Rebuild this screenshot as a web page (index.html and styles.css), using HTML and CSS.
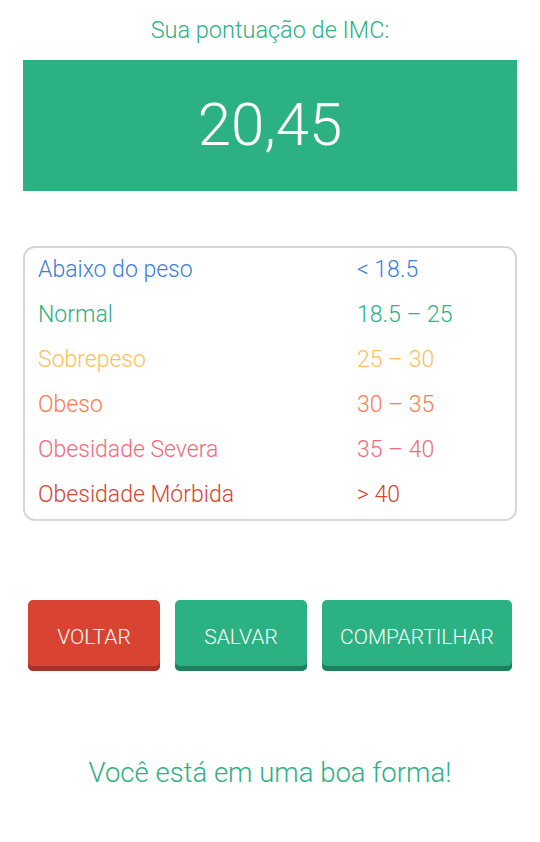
FILE: index.html
```html
<!DOCTYPE html>
<html lang="pt-BR">
<head>
    <meta charset="UTF-8">
    <meta name="viewport" content="width=device-width, initial-scale=1.0">
    <title>Resultado IMC</title>
    <link rel="stylesheet" href="styles.css">
</head>
<body>
    <h1 class="score-title">Sua pontuação de IMC:</h1>
    <div class="score-box">20,45</div>

    <div class="range-table">
        <div class="range-row under"><span class="range-label">Abaixo do peso</span><span class="range-value">&lt; 18.5</span></div>
        <div class="range-row normal"><span class="range-label">Normal</span><span class="range-value">18.5 – 25</span></div>
        <div class="range-row over"><span class="range-label">Sobrepeso</span><span class="range-value">25 – 30</span></div>
        <div class="range-row obese"><span class="range-label">Obeso</span><span class="range-value">30 – 35</span></div>
        <div class="range-row severe"><span class="range-label">Obesidade Severa</span><span class="range-value">35 – 40</span></div>
        <div class="range-row morbid"><span class="range-label">Obesidade Mórbida</span><span class="range-value">&gt; 40</span></div>
    </div>

    <div class="actions">
        <button type="button" class="btn btn-back">VOLTAR</button>
        <button type="button" class="btn btn-save">SALVAR</button>
        <button type="button" class="btn btn-share">COMPARTILHAR</button>
    </div>

    <p class="verdict">Você está em uma boa forma!</p>
</body>
</html>
```

FILE: styles.css
```css
body {
    font-family: Roboto, "Noto Sans", sans-serif;
    font-weight: 300;
    background-color: #fff;
    margin: 0;
    padding: 0 23px;
}
.score-title {
    color: #2bb182;
    font-size: 23.5px;
    font-weight: 300;
    text-align: center;
    margin: 0;
    padding-top: 16px;
    line-height: 28px;
}
.score-box {
    background-color: #2bb182;
    color: #fff;
    height: 131px;
    margin-top: 16px;
    font-size: 60px;
    line-height: 130px;
    text-align: center;
}
.range-table {
    margin-top: 55px;
    border: 2px solid #d6d6d6;
    border-radius: 12px;
    padding: 0 13px 1px;
}
.range-row {
    display: flex;
    height: 45px;
    align-items: center;
    font-size: 23px;
    line-height: 30px;
    padding-bottom: 2px;
    box-sizing: border-box;
}
.range-label {
    width: 319px;
}
.under { color: #3b7dd8; }
.normal { color: #2bb182; }
.over { color: #ffbe5c; }
.obese { color: #ff7b4f; }
.severe { color: #f2697b; }
.morbid { color: #d9432f; }
.actions {
    display: flex;
    gap: 15px;
    margin-top: 79px;
    padding: 0 5px;
}
.btn {
    font-family: Roboto, sans-serif;
    font-weight: 300;
    font-size: 21px;
    color: #fff;
    border: none;
    border-radius: 5px;
    height: 71px;
    padding: 3px 0 0;
    cursor: pointer;
}
.btn-back {
    width: 132px;
    background-color: #d94432;
    box-shadow: inset 0 -5px 0 #a9332a;
}
.btn-save {
    width: 132px;
    background-color: #2bb182;
    box-shadow: inset 0 -5px 0 #1f805d;
}
.btn-share {
    width: 190px;
    background-color: #2bb182;
    box-shadow: inset 0 -5px 0 #1f805d;
}
.verdict {
    color: #2bb182;
    font-size: 27.5px;
    line-height: 32px;
    text-align: center;
    margin: 86px 0 0;
}
```
